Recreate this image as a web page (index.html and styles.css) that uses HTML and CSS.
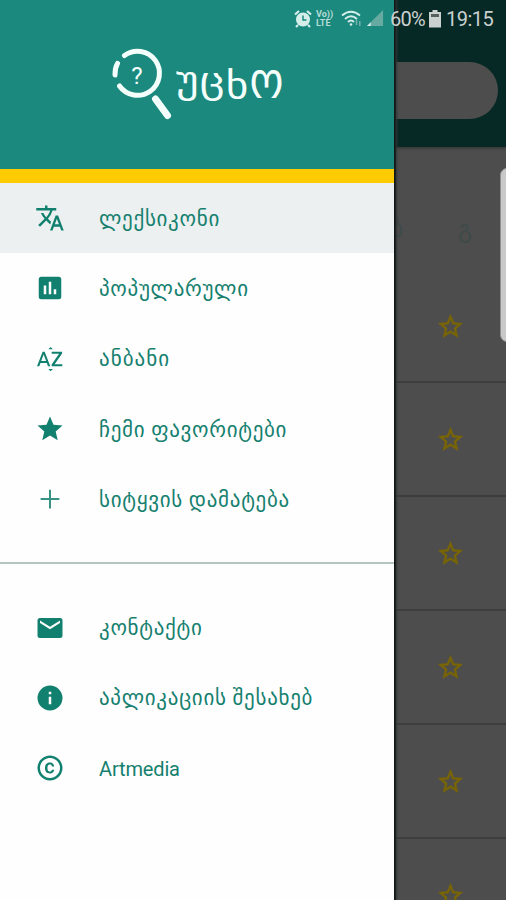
FILE: index.html
```html
<!DOCTYPE html>
<html lang="ka">
<head>
<meta charset="utf-8">
<title>უცხო</title>
<link rel="stylesheet" href="styles.css">
</head>
<body>
<div class="screen">
  <main class="app">
    <header class="appbar"><div class="search"></div></header>
    <div class="letters"><span>ბ</span><span>გ</span></div>
    <svg width="0" height="0" class="defs"><symbol id="star" viewBox="0 0 24 24"><path d="M22 9.240l-7.190-.620L12 2 9.190 8.630 2 9.240l5.460 4.730L5.820 21 12 17.270 18.180 21l-1.630-7.030L22 9.240zM12 15.400l-3.760 2.270 1-4.280-3.320-2.880 4.380-.38L12 6.100l1.710 4.040 4.380.38-3.320 2.880 1 4.280L12 15.400z"/></symbol></svg>
    <div class="word"><svg class="fav"><use href="#star"/></svg></div>
    <div class="word"><svg class="fav"><use href="#star"/></svg></div>
    <div class="word"><svg class="fav"><use href="#star"/></svg></div>
    <div class="word"><svg class="fav"><use href="#star"/></svg></div>
    <div class="word"><svg class="fav"><use href="#star"/></svg></div>
    <div class="word"><svg class="fav"><use href="#star"/></svg></div>
  </main>
  <div class="edge-handle"></div>
  <aside class="drawer">
    <div class="brand">
      <svg class="logo" viewBox="0 0 62 74" fill="none" stroke="#f4fffc" stroke-linecap="round">
        <path d="M14.500 8.500A22 22 0 1 1 9.500 39" stroke-width="5"/>
        <path d="M7.500 16.500Q4.800 21 5 28" stroke-width="5"/>
        <path d="M45.500 52L57.500 68.500" stroke-width="7"/>
        <text x="27" y="37" class="mark">?</text>
      </svg>
      <span class="title"><span class="low">უ</span><span class="low">ც</span><span class="high">ხ</span><span class="tall">ო</span></span>
    </div>
    <nav class="menu">
      <a class="item active"><svg class="icon" viewBox="0 0 24 24"><path d="M12.870 15.070l-2.540-2.510.03-.03A17.520 17.520 0 0 0 14.070 6H17V4h-7V2H8v2H1v2h11.170C11.500 7.920 10.440 9.750 9 11.350 8.070 10.320 7.300 9.190 6.690 8h-2c.73 1.630 1.730 3.170 2.980 4.560l-5.090 5.020L4 19l5-5 3.110 3.110.76-2.040zM18.500 10h-2L12 22h2l1.120-3h4.750L21 22h2l-4.500-12zm-2.620 7l1.620-4.330L19.120 17h-3.240z"/></svg><span>ლექსიკონი</span></a>
      <a class="item"><svg class="icon" viewBox="0 0 24 24"><path d="M19 3H5a2 2 0 0 0-2 2v14a2 2 0 0 0 2 2h14a2 2 0 0 0 2-2V5a2 2 0 0 0-2-2zM9 17H7v-7h2v7zm4 0h-2V7h2v10zm4 0h-2v-4h2v4z"/></svg><span>პოპულარული</span></a>
      <a class="item"><svg class="icon" viewBox="0 0 24 24"><path d="M14.300 4.100h-3.600l1.800-1.800 1.800 1.800zm-3.600 15.800h3.600l-1.800 1.800-1.800-1.800zM6.100 6.270L1.600 17.730h1.840l.92-2.450h5.110l.92 2.450h1.840L7.740 6.270H6.100zm-1.130 7.370l1.940-5.180 1.940 5.180H4.970zm10.760 2.500h6.120v1.590h-8.530v-1.290l5.920-8.560h-5.880v-1.600h8.300v1.260l-5.930 8.600z"/></svg><span class="wide">ანბანი</span></a>
      <a class="item"><svg class="icon" viewBox="0 0 24 24"><path d="M12 17.270L18.180 21l-1.640-7.030L22 9.240l-7.190-.61L12 2 9.190 8.630 2 9.240l5.460 4.730L5.820 21z"/></svg><span>ჩემი ფავორიტები</span></a>
      <a class="item"><svg class="icon plus" viewBox="0 0 24 24"><path d="M19.500 12.800h-6.700v6.700h-1.600v-6.700H4.500v-1.600h6.700V4.500h1.600v6.700h6.700z"/></svg><span>სიტყვის დამატება</span></a>
    </nav>
    <nav class="menu secondary">
      <a class="item"><svg class="icon" viewBox="0 0 24 24"><path d="M20 4H4a2 2 0 0 0-2 2v12a2 2 0 0 0 2 2h16a2 2 0 0 0 2-2V6a2 2 0 0 0-2-2zm0 4l-8 5-8-5V6l8 5 8-5v2z"/></svg><span>კონტაქტი</span></a>
      <a class="item"><svg class="icon" viewBox="0 0 24 24"><path d="M12 2a10 10 0 1 0 0 20 10 10 0 0 0 0-20zm1 15h-2v-6h2v6zm0-8h-2V7h2v2z"/></svg><span>აპლიკაციის შესახებ</span></a>
      <a class="item"><svg class="icon" viewBox="0 0 24 24"><path d="M10.080 10.860c.05-.33.16-.62.3-.87s.34-.46.59-.62c.24-.15.54-.22.91-.23.23.01.44.05.63.13.2.09.38.21.52.36s.25.33.34.53.13.42.14.64h1.790c-.02-.47-.11-.9-.28-1.290s-.4-.73-.7-1.010-.66-.5-1.080-.66-.88-.23-1.390-.23c-.65 0-1.220.11-1.700.34s-.88.53-1.200.92-.56.84-.71 1.360S8 11.290 8 11.870v.27c0 .58.080 1.120.230 1.640s.39.970.71 1.350.72.690 1.200.91 1.050.34 1.700.34c.47 0 .91-.08 1.320-.23s.77-.36 1.080-.63.56-.58.74-.94.29-.74.300-1.150h-1.790c-.01.21-.06.4-.15.580s-.21.330-.36.460-.32.230-.52.300c-.19.070-.39.090-.6.100-.36-.01-.66-.08-.89-.23-.25-.16-.45-.37-.59-.62s-.25-.55-.3-.88-.08-.67-.08-1v-.27c0-.35.030-.68.080-1.010zM12 2C6.480 2 2 6.480 2 12s4.480 10 10 10 10-4.480 10-10S17.520 2 12 2zm0 18c-4.410 0-8-3.590-8-8s3.590-8 8-8 8 3.590 8 8-3.590 8-8 8z"/></svg><span class="latin">Artmedia</span></a>
    </nav>
  </aside>
  <div class="status">
    <svg class="alarm" viewBox="0 0 18 18"><circle cx="9" cy="9.500" r="7"/><path d="M1 4.500L5 1M17 4.500L13 1M4 15l-2 2M14 15l2 2" stroke="#d5eeea" stroke-width="2.200"/><path d="M9 5.500V10h3.500" fill="none" stroke="#1b897e" stroke-width="1.500"/></svg>
    <span class="volte"><span>Vo))</span><span>LTE</span></span>
    <svg class="wifi" viewBox="0 0 22 18" fill="none" stroke="#d5eeea" stroke-width="1.900"><path d="M1 5.500Q10 -2 19 5.500M4 9Q10 3.500 16 9M7 12Q10 9 13 12"/><circle cx="10" cy="14.500" r="1.300" fill="#d5eeea" stroke="none"/><path d="M15.500 10v5M18.800 11v5" stroke="#70aea6" stroke-width="1.600"/></svg>
    <svg class="signal" viewBox="0 0 18 18"><path d="M17 0v17H0z" fill="#66aaa2"/><path d="M4 13v4H0z" fill="#d5eeea"/></svg>
    <span class="pct">60%</span>
    <svg class="battery" viewBox="0 0 12 18"><path d="M3.500 0h5v2H12v15.500H0V2h3.500z" fill="#cbd1cf"/><path d="M2 4h8v3H2z" fill="#53605d"/></svg>
    <span class="time">19:15</span>
  </div>
</div>
</body>
</html>
```
FILE: styles.css
```css
* { box-sizing: border-box; }
body { margin: 0; font-family: Roboto, "DejaVu Sans", sans-serif; }
.screen { position: relative; width: 506px; height: 900px; overflow: hidden; background: #4d4d4d; }
.app { height: 900px; overflow: hidden; }
.appbar { height: 147px; padding: 62px 8px 0 0; background: #062925; box-shadow: 0 1px 3px #303434; }
.search { height: 57px; border-radius: 0 29px 29px 0; background: #4d4d4d; }
.letters { height: 122.500px; padding: 68px 34px 0 0; display: flex; justify-content: flex-end; gap: 55px; font-size: 24px; line-height: 28px; color: #3f4b49; }
.defs { position: absolute; }
.word { height: 113.900px; padding: 42px 41px 0 0; display: flex; justify-content: flex-end; border-bottom: 2px solid #3d3d3d; }
.fav { width: 29px; height: 29px; fill: #796505; stroke: #796505; stroke-width: .4px; }
.edge-handle { position: absolute; left: 500px; top: 168px; width: 14px; height: 174px; border-radius: 7px; background: #c9c9c9; border: 1px solid #909090; }
.drawer { position: absolute; inset: 0 auto 0 0; width: 394px; background: #fefefe; box-shadow: 1px 0 0 #101817, 2px 0 0 #1c2221, 3px 0 2px #343636; }
.brand { display: flex; height: 183px; padding: 47px 0 0 110px; background: #1b897e; border-bottom: 14px solid #fdcb02; color: #f4fffc; }
.logo { width: 62px; height: 74px; flex: none; }
.mark { font: 24px Roboto, sans-serif; text-anchor: middle; fill: #f4fffc; stroke: none; }
.title { display: flex; margin-left: 4px; font-size: 36px; line-height: 70px; height: 70px; letter-spacing: 1px; transform: scaleX(1.2); transform-origin: left; }
.low { transform: translateY(-2px); }
.high { transform: translateY(4px); }
.tall { transform: translateY(4px) scaleY(1.4); transform-origin: 0 48px; }
.menu { display: flex; flex-direction: column; }
.item { display: flex; align-items: center; height: 70.300px; padding-left: 35px; gap: 34px; font-size: 21px; letter-spacing: .7px; color: #16806f; white-space: nowrap; }
.item span { padding-top: 1px; }
.item .wide { letter-spacing: 1px; }
.item .latin { font-size: 20px; letter-spacing: -.15px; }
.active { background: #ecf0f0; }
.icon { width: 30px; height: 30px; fill: #12806f; flex: none; }
.plus { opacity: .85; }
.secondary { margin-top: 28px; border-top: 2px solid #b4c5c1; padding-top: 28px; }
.status { position: absolute; left: 294px; top: 8px; height: 21px; display: flex; align-items: center; color: #cbd1cf; font-size: 20px; }
.alarm { width: 18px; height: 18px; fill: #d5eeea; }
.volte { display: flex; flex-direction: column; margin-left: 4px; width: 18px; font-size: 9px; font-weight: 700; line-height: 9px; color: #b5dcd6; }
.wifi { width: 22px; height: 18px; margin-left: 7px; }
.signal { width: 17px; height: 17px; margin-left: 4px; }
.pct { margin-left: 6px; width: 35px; letter-spacing: -.8px; }
.battery { width: 12px; height: 18px; margin-left: 4px; }
.time { margin-left: 5px; letter-spacing: -.5px; }
```
